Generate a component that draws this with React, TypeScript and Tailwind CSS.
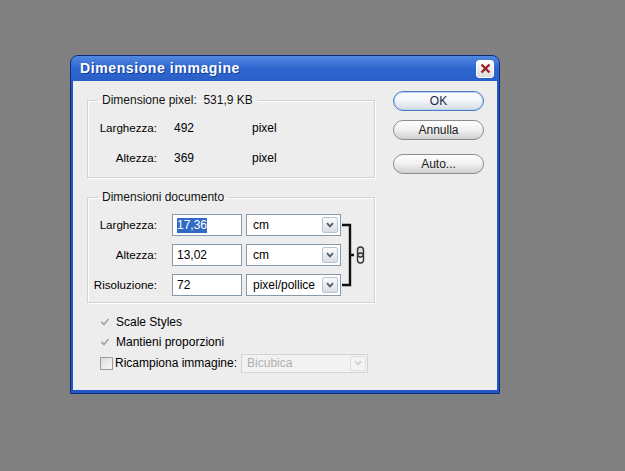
import React from "react";

function DropButton({ disabled }: { disabled?: boolean }) {
  return (
    <span
      className={
        disabled
          ? "ml-auto mr-[1px] w-[16px] h-[15px] rounded-[2px] border border-[#e0e0e0] bg-[#f4f4f4] flex items-center justify-center"
          : "ml-auto mr-[2px] w-[16px] h-[16px] rounded-[2px] border border-[#b8c2d2] bg-gradient-to-b from-[#fbfbfb] to-[#d9dde3] flex items-center justify-center"
      }
    >
      <svg width="8" height="6" viewBox="0 0 8 6">
        <path
          d="M1 1.2 L4 4.4 L7 1.2"
          fill="none"
          stroke={disabled ? "#cfcfcf" : "#4c5a70"}
          strokeWidth="1.7"
        />
      </svg>
    </span>
  );
}

function Select({ value }: { value: string }) {
  return (
    <div className="w-[95px] h-[22px] border border-[#8a99a8] bg-white flex items-center pl-[6px] text-black">
      <span>{value}</span>
      <DropButton />
    </div>
  );
}

function Field({ label, value, unit, selected }: { label: string; value: string; unit: string; selected?: boolean }) {
  return (
    <div className="flex items-center h-[22px]">
      <span className="w-[69px] text-right text-[11.6px]">{label}</span>
      <div className="ml-[15px] w-[70px] h-[22px] border border-[#8a99a8] bg-white flex items-center pl-[4px]">
        {selected ? <span className="bg-[#316ac5] text-white leading-[15px]">{value}</span> : <span>{value}</span>}
      </div>
      <div className="ml-[4px]">
        <Select value={unit} />
      </div>
    </div>
  );
}

function PillButton({ label, primary }: { label: string; primary?: boolean }) {
  return (
    <button
      className={
        primary
          ? "w-[91px] h-[20px] rounded-full border border-[#4d7cc6] bg-gradient-to-b from-[#ffffff] via-[#f1f4f9] to-[#d6dbe3] shadow-[inset_0_0_0_1px_#b9d1f3] text-[12px] text-[#1a2a44] flex items-center justify-center"
          : "w-[91px] h-[20px] rounded-full border border-[#8c8c8c] bg-gradient-to-b from-[#ffffff] via-[#f0f0f0] to-[#cfcfcf] text-[12px] text-[#1a1a1a] flex items-center justify-center"
      }
    >
      {label}
    </button>
  );
}

function GrayCheck() {
  return (
    <svg width="10" height="10" viewBox="0 0 10 10">
      <path d="M1.5 5 L4 7.5 L8.5 2" fill="none" stroke="#a8a8a8" strokeWidth="1.8" />
    </svg>
  );
}

export default function App() {
  return (
    <div className="w-[625px] h-[471px] bg-[#808080] pl-[70px] pt-[55px] font-['Liberation_Sans',Arial,sans-serif] text-[12px] text-black">
      <div className="w-[430px] rounded-t-[8px] border border-[#0c2c7e] bg-[#2457c4]">
        {/* Title bar */}
        <div className="h-[25px] rounded-t-[7px] bg-gradient-to-b from-[#5288e0] via-[#2f66cf] to-[#2a5fc8] flex items-center pl-[9px] pr-[5px]">
          <span className="text-white font-bold text-[14px] tracking-[0.6px] [text-shadow:1px_1px_0_#123f9a]">
            Dimensione immagine
          </span>
          <div className="ml-auto w-[18px] h-[18px] rounded-[3px] border border-white bg-gradient-to-b from-[#ffffff] to-[#dcdcdc] flex items-center justify-center">
            <svg width="11" height="11" viewBox="0 0 11 11">
              <path d="M1.5 1.5 L9.5 9.5 M9.5 1.5 L1.5 9.5" stroke="#9b2328" strokeWidth="2.4" />
            </svg>
          </div>
        </div>

        {/* Body */}
        <div className="mx-[2px] mb-[3px] h-[309px] bg-[#ededed] flex">
          <div className="ml-[14px] w-[288px]">
            {/* Dimensione pixel */}
            <fieldset className="mt-[12px] h-[85px] border border-[#d2d2d2] shadow-[inset_1px_1px_0_#ffffff,1px_1px_0_#ffffff]">
              <legend className="ml-[10px] px-[4px] leading-[14px] text-[#111]">
                Dimensione pixel:&nbsp;&nbsp;531,9 KB
              </legend>
              <div className="pt-[6px] text-[11.6px]">
                <div className="flex items-center h-[30px]">
                  <span className="w-[69px] text-right">Larghezza:</span>
                  <span className="ml-[17px] w-[78px] text-[12px]">492</span>
                  <span className="text-[12px]">pixel</span>
                </div>
                <div className="flex items-center h-[30px]">
                  <span className="w-[69px] text-right">Altezza:</span>
                  <span className="ml-[17px] w-[78px] text-[12px]">369</span>
                  <span className="text-[12px]">pixel</span>
                </div>
              </div>
            </fieldset>

            {/* Dimensioni documento */}
            <fieldset className="mt-[12px] h-[113px] border border-[#d2d2d2] shadow-[inset_1px_1px_0_#ffffff,1px_1px_0_#ffffff]">
              <legend className="ml-[10px] px-[4px] leading-[14px] text-[#111]">Dimensioni documento</legend>
              <div className="pt-[10px] flex items-start">
                <div className="flex flex-col gap-[8px]">
                  <Field label="Larghezza:" value="17,36" unit="cm" selected />
                  <Field label="Altezza:" value="13,02" unit="cm" />
                  <Field label="Risoluzione:" value="72" unit="pixel/pollice" />
                </div>
                <svg width="28" height="82" viewBox="0 0 28 82">
                  <path d="M1 11 H9 V71 H1 M9 41 H13" fill="none" stroke="#111" strokeWidth="2.4" />
                  <rect x="16.5" y="33" width="6" height="10" rx="3" fill="#dcdcdc" stroke="#333" strokeWidth="1.4" />
                  <rect x="16.5" y="39" width="6" height="10" rx="3" fill="none" stroke="#333" strokeWidth="1.4" />
                </svg>
              </div>
            </fieldset>

            {/* Options */}
            <div className="mt-[9px] flex flex-col">
              <div className="flex items-center h-[20px]">
                <span className="ml-[13px] w-[16px]">
                  <GrayCheck />
                </span>
                <span>Scale Styles</span>
              </div>
              <div className="flex items-center h-[20px]">
                <span className="ml-[13px] w-[16px]">
                  <GrayCheck />
                </span>
                <span>Mantieni proporzioni</span>
              </div>
              <div className="flex items-center h-[22px]">
                <span className="ml-[13px] w-[13px] h-[13px] border border-[#9a9a9a] bg-gradient-to-br from-[#dcdcdc] to-[#f8f8f8]" />
                <span className="ml-[2px]">Ricampiona immagine:</span>
                <div className="ml-[4px] w-[127px] h-[19px] border border-[#d4d4d4] bg-[#f2f2f2] flex items-center pl-[5px] text-[#b0b0b0]">
                  <span>Bicubica</span>
                  <DropButton disabled />
                </div>
              </div>
            </div>
          </div>

          {/* Buttons */}
          <div className="ml-[18px] w-[91px] pt-[10px] flex flex-col">
            <PillButton label="OK" primary />
            <div className="mt-[9px]">
              <PillButton label="Annulla" />
            </div>
            <div className="mt-[14px]">
              <PillButton label="Auto..." />
            </div>
          </div>
        </div>
      </div>
    </div>
  );
}
